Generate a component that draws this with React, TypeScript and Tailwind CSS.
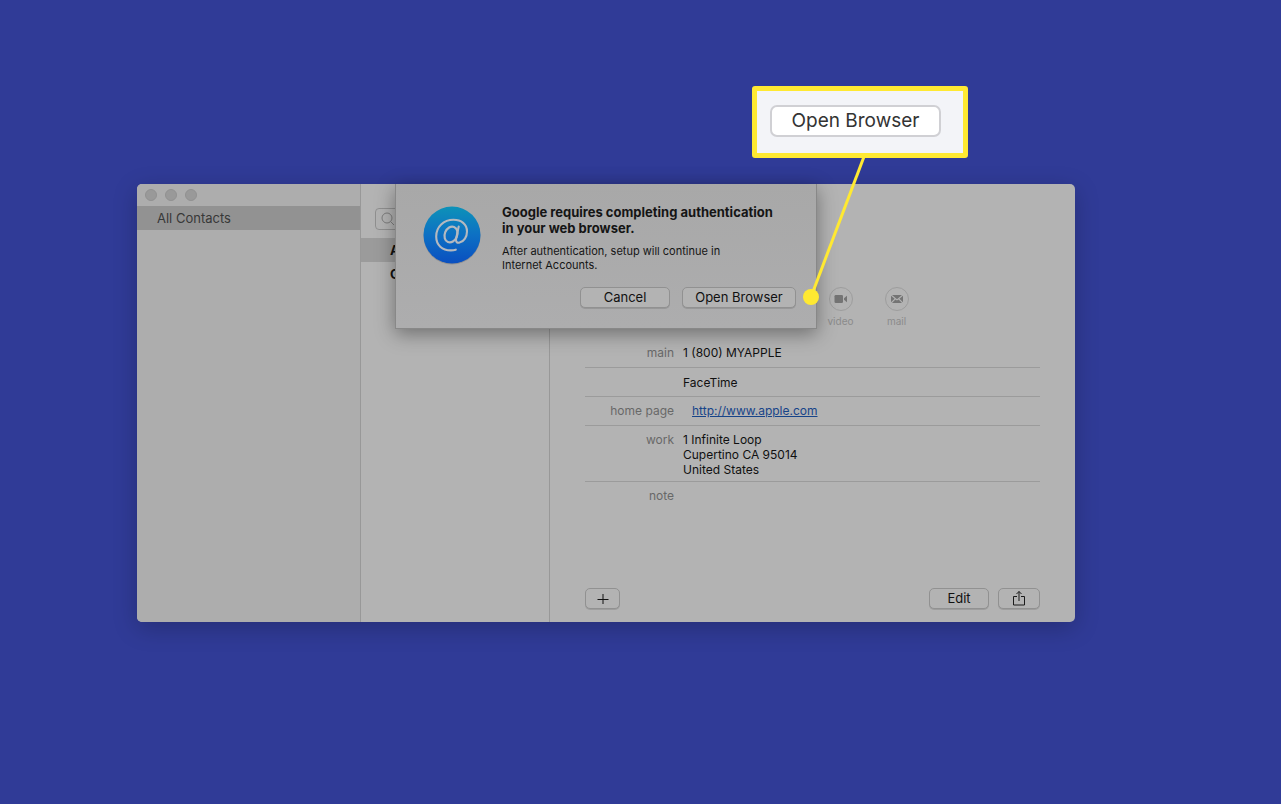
import React from "react";

function PushButton({ children, className, label }: { children: React.ReactNode; className: string; label?: string }) {
  return (
    <button
      type="button"
      aria-label={label}
      className={`flex h-[21px] items-center justify-center rounded-[5px] border border-[#919191] bg-[#b3b3b3] pb-0.5 text-[13px] leading-4 text-[#111111] shadow-[0_1px_0_rgba(0,0,0,0.12)] ${className}`}
    >
      {children}
    </button>
  );
}

function Action({ label, children }: { label: string; children: React.ReactNode }) {
  return (
    <button type="button" className="flex w-14 flex-col items-center gap-[3px] text-[10px] leading-[14px] text-[#8b8b8b]">
      <span className="flex h-6 w-6 items-center justify-center rounded-full border border-[#9d9d9d]">{children}</span>
      {label}
    </button>
  );
}

function Field({ label, className, children }: { label: string; className: string; children?: React.ReactNode }) {
  return (
    <div className={`flex gap-[9px] border-[#9b9b9b] text-[12px] leading-[15px] ${className}`}>
      <dt className="w-[89px] shrink-0 text-right text-[#686868]">{label}</dt>
      <dd className="text-[#101010]">{children}</dd>
    </div>
  );
}

function AccountsIcon() {
  return (
    <svg width="58" height="60" viewBox="0 0 58 60" className="mt-0.5 shrink-0" aria-hidden="true">
      <defs>
        <linearGradient id="disc" x1="0" y1="0" x2="0" y2="1">
          <stop offset="0" stopColor="#0d92b8" />
          <stop offset="0.5" stopColor="#0d70c4" />
          <stop offset="1" stopColor="#0a4fc0" />
        </linearGradient>
      </defs>
      <circle cx="29" cy="30" r="28.5" fill="#000000" opacity="0.15" />
      <circle cx="29" cy="29" r="28.5" fill="url(#disc)" />
      <g fill="none" stroke="#b4b9c0" strokeLinecap="round" strokeLinejoin="round">
        <ellipse cx="28" cy="28.5" rx="6.2" ry="8.2" strokeWidth="2.2" transform="rotate(22 28 28.5)" />
        <path
          strokeWidth="2.1"
          d="M35.7 20.5l-2.6 12.2c-.7 3.3 1.2 4.5 3.5 3.9 4.4-1.1 7.4-5.8 7.4-11.2 0-7.3-5.8-11.6-13.5-11.6C20.600 13.800 13.200 21 13.200 30.500c0 8.700 6 13.900 14.600 13.900 2 0 3.500-.2 5-.7"
        />
      </g>
    </svg>
  );
}

function AuthSheet() {
  return (
    <section
      role="dialog"
      aria-labelledby="sheet-title"
      className="absolute top-0 left-[258px] flex h-[145px] w-[422px] gap-[21px] border-x border-b border-[#888888] bg-linear-to-b from-[#a8a8a8] to-[#adadae] pt-5 pr-5 pl-[27px] shadow-[0_5px_18px_rgba(0,0,0,0.38)]"
    >
      <AccountsIcon />
      <div className="flex grow flex-col text-[#151515]">
        <h1 id="sheet-title" className="text-[13px] leading-4 font-bold">
          Google requires completing authentication
          <br />
          in your web browser.
        </h1>
        <p className="mt-2 text-[11px] leading-[14px]">
          After authentication, setup will continue in
          <br />
          Internet Accounts.
        </p>
        <div className="mt-[15px] flex justify-end gap-3">
          <PushButton className="w-[90px]">Cancel</PushButton>
          <PushButton className="w-[114px]">Open Browser</PushButton>
        </div>
      </div>
    </section>
  );
}

export default function App() {
  return (
    <main className="min-h-screen bg-[#303b97] pt-[184px] pr-[206px] pb-16 pl-[137px] font-['Inter','Liberation_Sans',sans-serif]">
      <div className="relative">
        <div className="flex min-h-[438px] overflow-hidden rounded-[5px] bg-[#b3b3b3] shadow-[0_6px_24px_rgba(0,0,0,0.22)]">
          <aside className="w-56 shrink-0 border-r border-[#989898] bg-[#adadad]">
            <div className="flex h-[22px] items-center gap-2 pl-2">
              <span className="h-3 w-3 rounded-full border border-[#919191] bg-[#999999]" />
              <span className="h-3 w-3 rounded-full border border-[#919191] bg-[#999999]" />
              <span className="h-3 w-3 rounded-full border border-[#919191] bg-[#999999]" />
            </div>
            <a href="#all" className="flex h-6 items-center bg-[#929292] pt-0.5 pl-5 text-[13px] text-[#383838]">
              All Contacts
            </a>
          </aside>

          <nav aria-label="Contacts" className="w-[189px] shrink-0 border-r border-[#989898] pt-6">
            <label className="mr-3 ml-[14px] flex h-[22px] items-center gap-1 rounded border border-[#8f8f8f] pl-[5px]">
              <svg width="14" height="14" viewBox="0 0 14 14" className="shrink-0" fill="none" stroke="#7c7c7c" aria-hidden="true">
                <circle cx="6" cy="6" r="5" />
                <path d="M9.600 9.600L13 13" />
              </svg>
              <input type="search" aria-label="Search" className="w-full min-w-0 bg-transparent text-[12px] outline-none" />
            </label>
            <ul className="mt-2 text-[13px] font-bold text-[#111111]">
              <li className="flex h-6 items-center bg-[#9b9b9b] pt-0.5 pl-[29px]">A</li>
              <li className="flex h-6 items-center pt-0.5 pl-[29px]">G</li>
            </ul>
          </nav>

          <article className="flex grow flex-col px-[35px] pt-[103px] pb-[13px]">
            <div className="flex pl-[50%]">
              <Action label="video">
                <svg width="14" height="10" viewBox="0 0 14 10" fill="#747474" aria-hidden="true">
                  <rect x="0.500" y="1" width="8.500" height="8" rx="1.200" />
                  <path d="M10 4.200L13 1.800v6.400L10 5.800z" />
                </svg>
              </Action>
              <Action label="mail">
                <svg width="12" height="8" viewBox="0 0 12 8" fill="#747474" aria-hidden="true">
                  <path d="M1 0h10L6 4.200zM0 .8l3.600 3L0 7.200zM12 .8L8.400 3.800 12 7.200zM4.400 4.400L6 5.600l1.600-1.200L11 8H1z" />
                </svg>
              </Action>
            </div>

            <dl className="mt-px">
              <Field label="main" className="h-[39px] border-b pt-4">
                1 (800) MYAPPLE
              </Field>
              <Field label="" className="h-[29px] border-b pt-[7px]">
                FaceTime
              </Field>
              <Field label="home page" className="h-[29px] border-b pt-[6px]">
                <a href="http://www.apple.com" className="ml-[9px] text-[#174489] underline">
                  http://www.apple.com
                </a>
              </Field>
              <Field label="work" className="h-14 border-b pt-[6px]">
                1 Infinite Loop
                <br />
                Cupertino CA 95014
                <br />
                United States
              </Field>
              <Field label="note" className="pt-[6px]" />
            </dl>

            <div className="mt-auto flex gap-[9px]">
              <PushButton className="mr-auto w-[35px]" label="Add">
                <svg width="12" height="12" viewBox="0 0 12 12" fill="none" stroke="#111111" aria-hidden="true">
                  <path d="M.5 7.500h11M6 2v11" />
                </svg>
              </PushButton>
              <PushButton className="w-[60px]">Edit</PushButton>
              <PushButton className="w-[42px]" label="Share">
                <svg width="14" height="17" viewBox="0 0 14 17" fill="none" stroke="#1a1a1a" aria-hidden="true">
                  <path d="M5 7.500H1.500v8.500h11V7.500H9M7 12V2.500M4.500 5L7 2.500 9.500 5" />
                </svg>
              </PushButton>
            </div>
          </article>
        </div>

        <AuthSheet />

        <svg width="80" height="160" viewBox="0 0 80 160" className="absolute top-[-34px] left-[660px]" aria-hidden="true">
          <path d="M14 147L68 4" stroke="#ffe932" strokeWidth="3" />
          <circle cx="14" cy="147" r="8" fill="#ffe932" />
        </svg>
        <div className="absolute top-[-98px] left-[615px] flex h-[72px] w-[216px] rounded-[3px] border-[5px] border-[#ffe932] bg-[#f3f4f8] pt-[14px] pl-[13px]">
          <button
            type="button"
            className="flex h-8 w-[171px] items-center justify-center rounded-[7px] border-2 border-[#d0d0d4] bg-white text-[19px] leading-6 text-[#333333]"
          >
            Open Browser
          </button>
        </div>
      </div>
    </main>
  );
}
